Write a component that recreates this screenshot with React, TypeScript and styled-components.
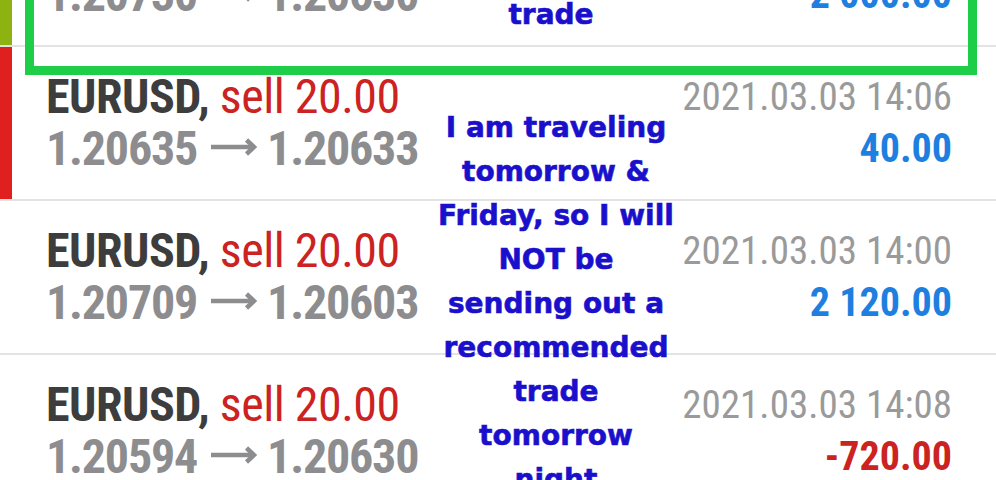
import React from 'react';
import styled, { createGlobalStyle } from 'styled-components';

const GlobalStyle = createGlobalStyle`
  html, body {
    margin: 0;
    padding: 0;
    background: #ffffff;
  }
`;

type Deal = {
  marker?: string;
  symbol: string;
  side: string;
  sideColor: string;
  open: string;
  close: string;
  time: string;
  profit: string;
  profitColor: string;
};

const deals: Deal[] = [
  {
    marker: '#8db312',
    symbol: 'EURUSD',
    side: 'buy 20.00',
    sideColor: '#1f7fe0',
    open: '1.20730',
    close: '1.20630',
    time: '2021.03.03 13:52',
    profit: '2 000.00',
    profitColor: '#1f7fe0',
  },
  {
    marker: '#e0201e',
    symbol: 'EURUSD',
    side: 'sell 20.00',
    sideColor: '#cc2222',
    open: '1.20635',
    close: '1.20633',
    time: '2021.03.03 14:06',
    profit: '40.00',
    profitColor: '#1f7fe0',
  },
  {
    symbol: 'EURUSD',
    side: 'sell 20.00',
    sideColor: '#cc2222',
    open: '1.20709',
    close: '1.20603',
    time: '2021.03.03 14:00',
    profit: '2 120.00',
    profitColor: '#1f7fe0',
  },
  {
    symbol: 'EURUSD',
    side: 'sell 20.00',
    sideColor: '#cc2222',
    open: '1.20594',
    close: '1.20630',
    time: '2021.03.03 14:08',
    profit: '-720.00',
    profitColor: '#cc2222',
  },
];

const Screen = styled.div`
  position: relative;
  width: 996px;
  height: 480px;
  overflow: hidden;
  background: #ffffff;
`;

const List = styled.div`
  margin-top: -107px;
`;

const Row = styled.div`
  display: grid;
  grid-template-columns: 12px 1fr auto;
  border-bottom: 2px solid #e3e3e3;
`;

const Marker = styled.div<{ $color?: string }>`
  background: ${(p) => p.$color || 'transparent'};
`;

const Cell = styled.div<{ $right?: boolean }>`
  padding: ${(p) => (p.$right ? '24px 44px 24px 0' : '24px 0 24px 34px')};
  text-align: ${(p) => (p.$right ? 'right' : 'left')};
  font-family: 'Roboto Condensed', Roboto, 'Liberation Sans', sans-serif;
  white-space: nowrap;
`;

const Line = styled.div`
  height: 52px;
  line-height: 52px;
  font-size: 48px;
  letter-spacing: -0.5px;
`;

const Symbol = styled.span`
  font-weight: 700;
  color: #3d3d3d;
`;

const Side = styled.span<{ $color: string }>`
  color: ${(p) => p.$color};
`;

const Prices = styled(Line)`
  font-weight: 700;
  letter-spacing: -1.2px;
  color: #8d8d8f;
`;

const Arrow = styled.svg`
  width: 46px;
  height: 18px;
  margin: 0 10px 0 14px;
  vertical-align: 9px;
`;

const Time = styled(Line)`
  font-size: 39px;
  letter-spacing: 0;
  color: #9a9a9a;
`;

const Profit = styled(Line)<{ $color: string }>`
  font-size: 40px;
  font-weight: 700;
  letter-spacing: 0;
  color: ${(p) => p.$color};
`;

const Highlight = styled.div`
  position: absolute;
  left: 25px;
  right: 19px;
  top: -120px;
  height: 195px;
  box-sizing: border-box;
  border: 9px solid #1fce48;
`;

const Note = styled.div<{ $top: number; $center: number }>`
  position: absolute;
  top: ${(p) => p.$top}px;
  left: ${(p) => p.$center - 150}px;
  width: 300px;
  text-align: center;
  font-family: 'DejaVu Sans', Verdana, sans-serif;
  font-weight: 700;
  font-size: 28px;
  line-height: 44px;
  color: #1a10cc;
  -webkit-text-stroke: 0.6px #1a10cc;
`;

const PriceArrow = () => (
  <Arrow viewBox="0 0 46 18">
    <g fill="none" stroke="currentColor" strokeWidth="4.5">
      <line x1="0" y1="9" x2="43" y2="9" />
      <polyline points="35.5,2 43,9 35.5,16" />
    </g>
  </Arrow>
);

const DealRow: React.FC<{ deal: Deal }> = ({ deal }) => (
  <Row>
    <Marker $color={deal.marker} />
    <Cell>
      <Line>
        <Symbol>{deal.symbol},</Symbol> <Side $color={deal.sideColor}>{deal.side}</Side>
      </Line>
      <Prices>
        {deal.open}
        <PriceArrow />
        {deal.close}
      </Prices>
    </Cell>
    <Cell $right>
      <Time>{deal.time}</Time>
      <Profit $color={deal.profitColor}>{deal.profit}</Profit>
    </Cell>
  </Row>
);

const noteLines = [
  'I am traveling',
  'tomorrow &',
  'Friday, so I will',
  'NOT be',
  'sending out a',
  'recommended',
  'trade',
  'tomorrow',
  'night',
];

export default function App() {
  return (
    <>
      <GlobalStyle />
      <Screen>
        <List>
          {deals.map((d, i) => (
            <DealRow key={i} deal={d} />
          ))}
        </List>
        <Highlight />
        <Note $top={-51} $center={551}>
          <div>recommended</div>
          <div>trade</div>
        </Note>
        <Note $top={106} $center={556}>
          {noteLines.map((l, i) => (
            <div key={i}>{l}</div>
          ))}
        </Note>
      </Screen>
    </>
  );
}
